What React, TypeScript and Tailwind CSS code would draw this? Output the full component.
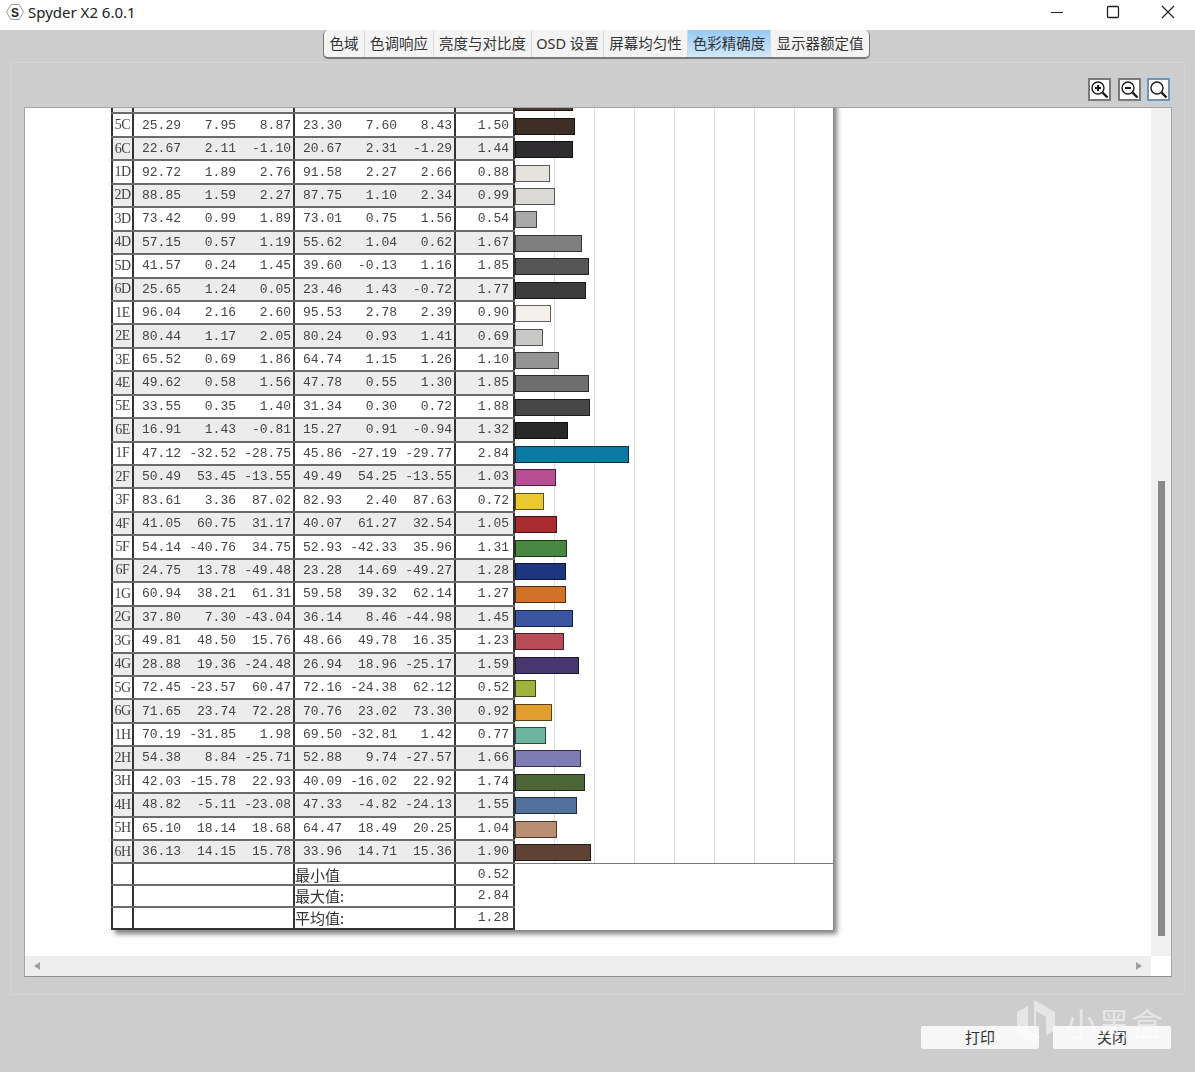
const rows: [string, string, string, string, string, string, string, string, string][] = [
    ["4C", "41.15", "34.55", "20.51", "39.57", "34.18", "20.68", "1.45", "#4a3a30"],
    ["5C", "25.29", "7.95", "8.87", "23.30", "7.60", "8.43", "1.50", "#3f2e26"],
    ["6C", "22.67", "2.11", "-1.10", "20.67", "2.31", "-1.29", "1.44", "#2f2d30"],
    ["1D", "92.72", "1.89", "2.76", "91.58", "2.27", "2.66", "0.88", "#e6e2de"],
    ["2D", "88.85", "1.59", "2.27", "87.75", "1.10", "2.34", "0.99", "#dcdad6"],
    ["3D", "73.42", "0.99", "1.89", "73.01", "0.75", "1.56", "0.54", "#a9a9a7"],
    ["4D", "57.15", "0.57", "1.19", "55.62", "1.04", "0.62", "1.67", "#7f7f7f"],
    ["5D", "41.57", "0.24", "1.45", "39.60", "-0.13", "1.16", "1.85", "#565656"],
    ["6D", "25.65", "1.24", "0.05", "23.46", "1.43", "-0.72", "1.77", "#3c3c3c"],
    ["1E", "96.04", "2.16", "2.60", "95.53", "2.78", "2.39", "0.90", "#f4f0ec"],
    ["2E", "80.44", "1.17", "2.05", "80.24", "0.93", "1.41", "0.69", "#c8c8c6"],
    ["3E", "65.52", "0.69", "1.86", "64.74", "1.15", "1.26", "1.10", "#949494"],
    ["4E", "49.62", "0.58", "1.56", "47.78", "0.55", "1.30", "1.85", "#6e6e6e"],
    ["5E", "33.55", "0.35", "1.40", "31.34", "0.30", "0.72", "1.88", "#474747"],
    ["6E", "16.91", "1.43", "-0.81", "15.27", "0.91", "-0.94", "1.32", "#282828"],
    ["1F", "47.12", "-32.52", "-28.75", "45.86", "-27.19", "-29.77", "2.84", "#0b7aa3"],
    ["2F", "50.49", "53.45", "-13.55", "49.49", "54.25", "-13.55", "1.03", "#b84f94"],
    ["3F", "83.61", "3.36", "87.02", "82.93", "2.40", "87.63", "0.72", "#ecc92f"],
    ["4F", "41.05", "60.75", "31.17", "40.07", "61.27", "32.54", "1.05", "#a92b30"],
    ["5F", "54.14", "-40.76", "34.75", "52.93", "-42.33", "35.96", "1.31", "#47873f"],
    ["6F", "24.75", "13.78", "-49.48", "23.28", "14.69", "-49.27", "1.28", "#1e3580"],
    ["1G", "60.94", "38.21", "61.31", "59.58", "39.32", "62.14", "1.27", "#d0722a"],
    ["2G", "37.80", "7.30", "-43.04", "36.14", "8.46", "-44.98", "1.45", "#3c55a0"],
    ["3G", "49.81", "48.50", "15.76", "48.66", "49.78", "16.35", "1.23", "#b84c57"],
    ["4G", "28.88", "19.36", "-24.48", "26.94", "18.96", "-25.17", "1.59", "#47366f"],
    ["5G", "72.45", "-23.57", "60.47", "72.16", "-24.38", "62.12", "0.52", "#a1b33c"],
    ["6G", "71.65", "23.74", "72.28", "70.76", "23.02", "73.30", "0.92", "#e29e2f"],
    ["1H", "70.19", "-31.85", "1.98", "69.50", "-32.81", "1.42", "0.77", "#6eb5a0"],
    ["2H", "54.38", "8.84", "-25.71", "52.88", "9.74", "-27.57", "1.66", "#7e7cb4"],
    ["3H", "42.03", "-15.78", "22.93", "40.09", "-16.02", "22.92", "1.74", "#4d6637"],
    ["4H", "48.82", "-5.11", "-23.08", "47.33", "-4.82", "-24.13", "1.55", "#51709c"],
    ["5H", "65.10", "18.14", "18.68", "64.47", "18.49", "20.25", "1.04", "#b98e72"],
    ["6H", "36.13", "14.15", "15.78", "33.96", "14.71", "15.36", "1.90", "#5f4234"],
];

const tabs = [
    { label: "色域", w: "w-[41px]" },
    { label: "色调响应", w: "w-[69px]" },
    { label: "亮度与对比度", w: "w-[98px]" },
    { label: "OSD 设置", w: "w-[72px]" },
    { label: "屏幕均匀性", w: "w-[84px]" },
    { label: "色彩精确度", w: "w-[83px]", active: true },
    { label: "显示器额定值", w: "w-[98px]" },
];

const footer = [
    ["最小值", "0.52"],
    ["最大值:", "2.84"],
    ["平均值:", "1.28"],
];

const ZoomIcon = ({ kind }: { kind: "in" | "out" | "fit" }) => (
    <div className={`w-[23px] h-[23px] border-2 bg-white ${kind === "fit" ? "border-[#7d93a8] outline-2 outline-[#bcd3e6]" : "border-[#7a7a7a]"}`}>
        <svg width="19" height="19" viewBox="0 0 19 19" fill="none" stroke="#1a1a1a">
            <circle cx="8" cy="8" r="6" strokeWidth="1.4" />
            <path d="M12.5 12.5 L17.5 17.5" strokeWidth="2.4" />
            {kind !== "fit" && <path d="M5 8 H11" strokeWidth="2" />}
            {kind === "in" && <path d="M8 5 V11" strokeWidth="2" />}
        </svg>
    </div>
);

const DataRow = ({ row, index }: { row: (typeof rows)[number]; index: number }) => {
    const [code, a, b, c, d, e, f, de, color] = row;
    const shaded = index % 2 === 0;
    const last = index === rows.length - 1;
    return (
        <div className="flex h-[23.45px]">
            <div className={`flex w-[404px] border-b-2 border-[#6b6b6b] ${shaded ? "bg-[#ececec]" : "bg-white"}`}>
                <div className="w-[21px] border-l-2 border-[#333] flex items-center justify-center font-['Liberation_Serif',serif] text-[14px] tracking-[-0.5px]">{code}</div>
                <div className="w-[161px] border-l-2 border-[#333] flex items-center text-right">
                    <span className="w-[47px]">{a}</span>
                    <span className="w-[55px]">{b}</span>
                    <span className="w-[55px]">{c}</span>
                </div>
                <div className="w-[161px] border-l-2 border-[#333] flex items-center text-right">
                    <span className="w-[47px]">{d}</span>
                    <span className="w-[55px]">{e}</span>
                    <span className="w-[55px]">{f}</span>
                </div>
                <div className="w-[61px] border-x-2 border-[#333] flex items-center justify-end pr-[4px]">{de}</div>
            </div>
            <div className={`flex-1 flex items-center bg-[linear-gradient(to_right,#dcdcdc_1px,transparent_1px)] bg-[length:40px_100%] bg-[position:39px_0] ${last ? "border-b border-[#777]" : ""}`}>
                <div
                    className="h-[17px] border border-black/60"
                    style={{ width: `${parseFloat(de) * 40}px`, backgroundColor: color }}
                />
            </div>
        </div>
    );
};

export default function App() {
    return (
        <div className="relative w-[1195px] h-[1072px] flex flex-col overflow-hidden bg-[#cdcdcd] font-['Noto_Sans','Noto_Sans_CJK_SC',sans-serif] text-[#333]">
            <header className="h-[30px] shrink-0 bg-white flex items-center pb-[6px]">
                <svg className="ml-[5px]" width="20" height="20" viewBox="0 0 20 20">
                    <path d="M6 2.5 H14 L18.5 10 L14 17.5 H6 L1.5 10 Z" fill="#fff" stroke="#9a9a9a" strokeWidth="1" strokeLinejoin="round" />
                    <text x="10" y="14.5" textAnchor="middle" fontSize="12" fontWeight="700" fill="#222" fontFamily="Liberation Sans, sans-serif">S</text>
                </svg>
                <span className="ml-[3px] text-[15px] text-[#222]">Spyder X2 6.0.1</span>
                <div className="ml-auto flex items-center">
                    <div className="w-[56px] flex justify-center">
                        <svg width="14" height="14" viewBox="0 0 14 14" stroke="#222"><path d="M1 7.5 H13" /></svg>
                    </div>
                    <div className="w-[56px] flex justify-center">
                        <svg width="14" height="14" viewBox="0 0 14 14" fill="none" stroke="#222" strokeWidth="1.3"><rect x="1.5" y="1.5" width="11" height="11" rx="1" /></svg>
                    </div>
                    <div className="w-[54px] flex justify-center">
                        <svg width="14" height="14" viewBox="0 0 14 14" stroke="#222" strokeWidth="1.2"><path d="M1 1 L13 13 M13 1 L1 13" /></svg>
                    </div>
                </div>
            </header>

            <div className="flex-1 flex flex-col px-[10px]">
                <nav className="self-center -ml-[2px] h-[29px] flex rounded-[5px] border-x border-b-2 border-[#777] bg-[#f4f4f4] overflow-hidden">
                    {tabs.map((t) => (
                        <div
                            key={t.label}
                            className={`${t.w} flex items-center justify-center border-r border-[#d8d8d8] last:border-r-0 text-[14.5px] leading-none whitespace-nowrap ${t.active ? "bg-gradient-to-b from-[#95c9f6] to-[#d3e9fb]" : ""}`}
                        >
                            {t.label}
                        </div>
                    ))}
                </nav>

                <section className="mt-[3px] h-[933px] flex flex-col rounded-[3px] border border-[#d6d6d6] pl-[13px] pr-[12px]">
                    <div className="mt-[15px] flex justify-end gap-[6.5px] pr-[2px]">
                        <ZoomIcon kind="in" />
                        <ZoomIcon kind="out" />
                        <ZoomIcon kind="fit" />
                    </div>

                    <div className="mt-[6px] h-[870px] grid grid-cols-[1fr_20px] grid-rows-[1fr_20px] border border-[#a6a6a6] border-b-[#8f8f8f] bg-white">
                        <div className="overflow-hidden">
                            <div className="-mt-[17px] ml-[86px] w-[722px] bg-white shadow-[4px_4px_5px_rgba(0,0,0,0.5)] blur-[0.35px] font-['Liberation_Mono',monospace] text-[13px] leading-none text-[#444]">
                                {rows.map((row, i) => (
                                    <DataRow key={row[0]} row={row} index={i} />
                                ))}
                                {footer.map(([label, value], i) => (
                                    <div key={label} className="flex h-[21.7px]">
                                        <div className={`flex w-[404px] border-[#6b6b6b] ${i === 2 ? "border-b-2 border-b-[#333]" : "border-b-2"}`}>
                                            <div className="w-[21px] border-l-2 border-[#333]" />
                                            <div className="w-[161px] border-l-2 border-[#333]" />
                                            <div className="w-[161px] border-l-2 border-[#333] flex items-center font-['Noto_Sans_CJK_SC',sans-serif] text-[15px] text-[#333]">{label}</div>
                                            <div className="w-[61px] border-x-2 border-[#333] flex items-center justify-end pr-[4px]">{value}</div>
                                        </div>
                                    </div>
                                ))}
                            </div>
                        </div>

                        <div className="bg-[#f0f0f0] pt-[373px] flex justify-center">
                            <div className="w-[7px] h-[455px] bg-[#8a8a8a]" />
                        </div>
                        <div className="bg-[#eeeeee] flex items-center justify-between px-[9px]">
                            <div className="w-0 h-0 border-y-[4px] border-y-transparent border-r-[6px] border-r-[#a0a0a0]" />
                            <div className="w-0 h-0 border-y-[4px] border-y-transparent border-l-[6px] border-l-[#a0a0a0]" />
                        </div>
                        <div className="bg-white" />
                    </div>
                </section>

                <footer className="mt-[31px] flex justify-end gap-[14px] pr-[14px]">
                    <div className="w-[118px] h-[23px] rounded-[2px] bg-[#f7f7f7] flex items-center justify-center text-[15px]">打印</div>
                    <div className="w-[118px] h-[23px] rounded-[2px] bg-[#f7f7f7] flex items-center justify-center text-[15px]">关闭</div>
                </footer>
            </div>

            <div className="absolute left-[1016px] top-[1000px] flex items-center pointer-events-none text-white/50">
                <svg width="40" height="44" viewBox="0 0 40 44" fill="currentColor">
                    <path d="M1 12 L12 6 V30 L24 37 L17 43 L1 34 Z" />
                    <path d="M18 0 L39 12 V30 L30 36 V17 L20 11 V25 L18 26 Z" />
                </svg>
                <span className="ml-[9px] text-[32px] leading-none tracking-[1px] font-['Noto_Sans_CJK_SC',sans-serif]">小黑盒</span>
            </div>
        </div>
    );
}
